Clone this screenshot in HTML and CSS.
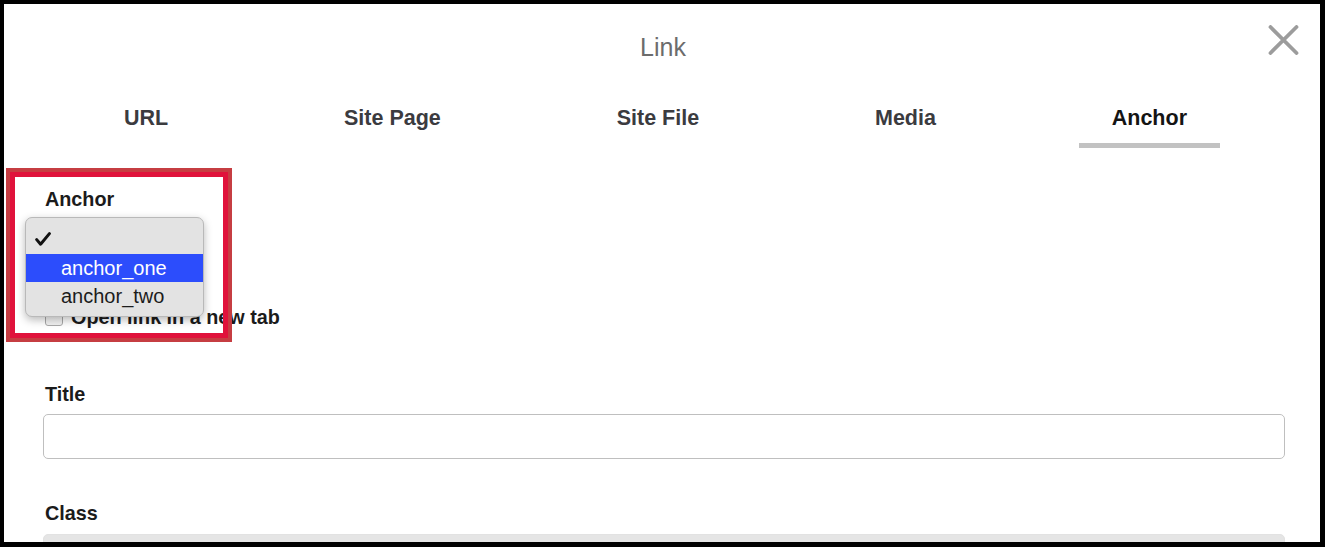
FILE: index.html
```html
<!DOCTYPE html>
<html lang="en">
<head>
<meta charset="utf-8">
<title>Link</title>
<link rel="stylesheet" href="styles.css">
</head>
<body>
<div class="modal">
  <header class="modal-header">
    <h1 class="modal-title">Link</h1>
    <button class="close-btn" type="button" aria-label="Close">
      <svg width="31" height="30" viewBox="0 0 31 30"><path d="M2.5 2 L28.5 28 M28.5 2 L2.5 28" stroke="#9c9c9c" stroke-width="3.8" stroke-linecap="round" fill="none"/></svg>
    </button>
  </header>
  <nav class="tabs">
    <span class="tab">URL</span>
    <span class="tab">Site Page</span>
    <span class="tab">Site File</span>
    <span class="tab">Media</span>
    <span class="tab active">Anchor</span>
  </nav>
  <form class="form">
    <div class="field field-anchor">
      <label class="label">Anchor</label>
      <div class="select-box"></div>
      <div class="checkbox-row">
        <span class="checkbox"></span>
        <span class="checkbox-label">Open link in a new tab</span>
      </div>
    </div>
    <div class="field field-title">
      <label class="label">Title</label>
      <div class="input"></div>
    </div>
    <div class="field field-class">
      <label class="label">Class</label>
      <div class="input input-disabled"></div>
    </div>
  </form>
  <ul class="popup">
    <li class="popup-item checked">
      <svg class="check" width="16" height="14" viewBox="0 0 16 14"><path d="M1.7 7.6 L5.6 12.2 L14.4 1.6" stroke="#111" stroke-width="3" fill="none" stroke-linecap="round" stroke-linejoin="round"/></svg>
    </li>
    <li class="popup-item selected">anchor_one</li>
    <li class="popup-item">anchor_two</li>
  </ul>
  <div class="highlight"></div>
</div>
</body>
</html>
```

FILE: styles.css
```css
html, body {
  margin: 0;
  padding: 0;
}
body {
  background: #000;
  width: 1325px;
  height: 547px;
  overflow: hidden;
  font-family: "Liberation Sans", Arial, sans-serif;
}
.modal {
  position: relative;
  margin: 4px 5px 5px 4px;
  width: 1316px;
  height: 538px;
  background: #fff;
  overflow: hidden;
}
.modal-header {
  padding: 28px 0 0 2px;
  height: 30px;
  text-align: center;
}
.modal-title {
  margin: 0;
  font-size: 25px;
  line-height: 30px;
  font-weight: 400;
  color: #6c6c6c;
}
.close-btn {
  position: absolute;
  top: 21px;
  right: 21px;
  width: 31px;
  height: 30px;
  padding: 0;
  border: 0;
  background: none;
  display: flex;
}
.tabs {
  display: flex;
  justify-content: space-between;
  padding: 0 100px 0 87px;
}
.tab {
  padding: 43px 33px 12px;
  font-size: 21.5px;
  line-height: 26px;
  font-weight: 700;
  color: #3b3b3f;
  border-bottom: 5px solid transparent;
}
.tab.active {
  color: #141414;
  border-bottom-color: #c2c2c2;
}
.form {
  padding: 0 35px 0 39px;
}
.label {
  display: block;
  padding-left: 2px;
  font-size: 19.8px;
  line-height: 24px;
  font-weight: 700;
  color: #1b1b1b;
}
.field-anchor {
  margin-top: 39.3px;
}
.select-box {
  margin: 9px 0 0 2px;
  width: 140px;
  height: 40px;
  box-sizing: border-box;
  border: 1px solid #c6c6c6;
  border-radius: 5px;
}
.checkbox-row {
  margin-top: 44.5px;
  display: flex;
  align-items: center;
  gap: 8px;
  padding-left: 2px;
  height: 24px;
}
.checkbox {
  width: 18px;
  height: 18px;
  box-sizing: border-box;
  border: 1px solid #a9a9a9;
  border-radius: 3px;
  background: linear-gradient(#fff, #f1f1f1);
}
.checkbox-label {
  font-size: 19.8px;
  line-height: 24px;
  font-weight: 700;
  color: #1b1b1b;
}
.field-title {
  margin-top: 52.8px;
}
.field-class {
  margin-top: 41.3px;
}
.input {
  margin-top: 8.7px;
  height: 45px;
  box-sizing: border-box;
  border: 1.6px solid #bfbfbf;
  border-radius: 5px;
  background: #fff;
}
.field-class .input {
  margin-top: 9.7px;
}
.input-disabled {
  background: #e5e5e5;
  border-color: #e2e2e2;
}
.popup {
  position: absolute;
  left: 21px;
  top: 212.7px;
  width: 179px;
  box-sizing: border-box;
  margin: 0;
  padding: 6px 0 5.5px;
  list-style: none;
  background: #e3e3e3;
  border: 1px solid #b9b9b9;
  border-radius: 7px;
  box-shadow: 0 3px 9px rgba(0, 0, 0, 0.28);
  font-size: 20px;
  color: #1c1c1c;
}
.popup-item {
  height: 28.5px;
  line-height: 28.5px;
  padding-left: 35px;
}
.popup-item.checked {
  height: 30px;
  padding-left: 9px;
  display: flex;
  align-items: center;
}
.popup-item.selected {
  background: #2c4dfc;
  color: #fff;
}
.highlight {
  position: absolute;
  left: 6px;
  top: 168px;
  width: 218px;
  height: 166px;
  box-sizing: border-box;
  border: 5px solid #e0123b;
  outline: 4px solid #c63d42;
}
```
